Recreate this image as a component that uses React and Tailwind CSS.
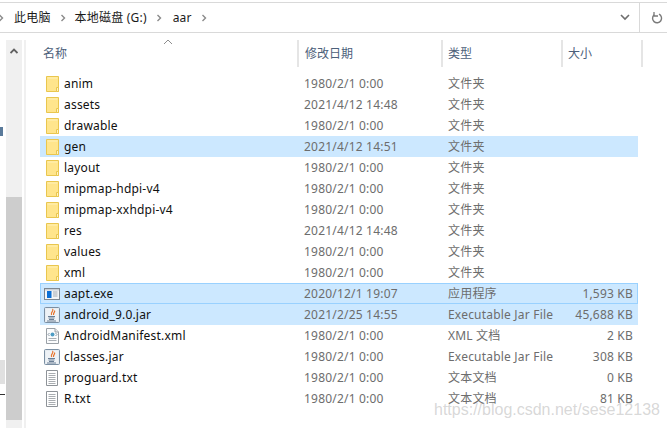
const FONT = '"Noto Sans","Noto Sans CJK SC",sans-serif';

function FolderIcon() {
  return (
    <svg width="16" height="18" viewBox="0 0 16 18" className="shrink-0">
      <path d="M2.5 1.5H14.5V16.5H2.5Z" fill="#ffe58c" stroke="#e9c64e" />
      <path d="M3.5 2.5H13.5V3.5H3.5Z" fill="#fff0b8" />
      <path d="M12.5 16.5V12.5H14.5V16.5Z" fill="#fff3c4" stroke="#e9c64e" />
    </svg>
  );
}
function ExeIcon() {
  return (
    <svg width="16" height="18" viewBox="0 0 16 18" className="shrink-0">
      <rect x="0.5" y="3.5" width="15" height="11" fill="#f4f5f6" stroke="#7d8791" />
      <rect x="1" y="4" width="14" height="1.5" fill="#c9d0d8" />
      <rect x="3" y="6" width="4.5" height="7" fill="#0a6fd6" />
      <path d="M9 7H13.5M9 9H13.5M9 11H13.5" stroke="#a4abb3" />
    </svg>
  );
}
function JarIcon() {
  return (
    <svg width="16" height="18" viewBox="0 0 16 18" className="shrink-0">
      <rect x="0.5" y="1.5" width="15" height="15" rx="1" fill="#dfe6ed" stroke="#7b8fa3" />
      <rect x="1.5" y="2.5" width="13" height="13" fill="#eef2f6" />
      <path d="M8.5 3C10.5 5 6 6 7.5 9M10.5 4.5C11.5 6 9 6.5 9.5 9" stroke="#e8722a" strokeWidth="1.2" fill="none" />
      <path d="M4 10.5H11M4.5 12H10.5M5 13.5H10M3 15H12" stroke="#6a7f96" />
    </svg>
  );
}
function XmlIcon() {
  return (
    <svg width="16" height="18" viewBox="0 0 16 18" className="shrink-0">
      <path d="M2.5 1.5H11L14.5 5V16.5H2.5Z" fill="#fbfcfd" stroke="#9aa0a6" />
      <path d="M11 1.5V5H14.5" fill="#e8ebee" stroke="#9aa0a6" />
      <circle cx="8.5" cy="7.5" r="2" fill="#4d9cc4" />
      <path d="M5.5 6L4 7.5L5.5 9M11.5 6L13 7.5L11.5 9" stroke="#8796a3" fill="none" />
      <path d="M4.5 11.5H12.5M4.5 13.5H12.5" stroke="#aab0b6" />
    </svg>
  );
}
function TxtIcon() {
  return (
    <svg width="16" height="18" viewBox="0 0 16 18" className="shrink-0">
      <path d="M2.5 1.5H13.5V16.5H2.5Z" fill="#ffffff" stroke="#8e9398" />
      <path d="M4.5 4.5H11.5M4.5 6.5H11.5M4.5 8.5H11.5M4.5 10.5H11.5M4.5 12.5H11.5M4.5 14.5H11.5" stroke="#a9adb1" />
    </svg>
  );
}

const rows = [
  ["anim", "1980/2/1 0:00", "文件夹", "", "folder"],
  ["assets", "2021/4/12 14:48", "文件夹", "", "folder"],
  ["drawable", "1980/2/1 0:00", "文件夹", "", "folder"],
  ["gen", "2021/4/12 14:51", "文件夹", "", "folder", "sel"],
  ["layout", "1980/2/1 0:00", "文件夹", "", "folder"],
  ["mipmap-hdpi-v4", "1980/2/1 0:00", "文件夹", "", "folder"],
  ["mipmap-xxhdpi-v4", "1980/2/1 0:00", "文件夹", "", "folder"],
  ["res", "2021/4/12 14:48", "文件夹", "", "folder"],
  ["values", "1980/2/1 0:00", "文件夹", "", "folder"],
  ["xml", "1980/2/1 0:00", "文件夹", "", "folder"],
  ["aapt.exe", "2020/12/1 19:07", "应用程序", "1,593 KB", "exe", "focus"],
  ["android_9.0.jar", "2021/2/25 14:55", "Executable Jar File", "45,688 KB", "jar", "sel"],
  ["AndroidManifest.xml", "1980/2/1 0:00", "XML 文档", "2 KB", "xml"],
  ["classes.jar", "1980/2/1 0:00", "Executable Jar File", "308 KB", "jar"],
  ["proguard.txt", "1980/2/1 0:00", "文本文档", "0 KB", "txt"],
  ["R.txt", "1980/2/1 0:00", "文本文档", "81 KB", "txt"],
];
const icons = { folder: FolderIcon, exe: ExeIcon, jar: JarIcon, xml: XmlIcon, txt: TxtIcon };

function Row({ r }) {
  const Icon = icons[r[4]];
  const bg =
    r[5] === "focus"
      ? "bg-[#cce8ff] border border-[#99d1ff]"
      : r[5] === "sel"
      ? "bg-[#cce8ff] border border-transparent"
      : "border border-transparent";
  return (
    <div className={`flex items-center h-[21px] w-[598px] text-[12px] leading-[19px] tracking-[0.2px] ${bg}`}>
      <div className="w-[263px] flex items-center pl-[3px] gap-[4px] text-[#101010] whitespace-nowrap">
        <Icon />
        <span>{r[0]}</span>
      </div>
      <div className="w-[144px] text-[#6d6d6d] whitespace-nowrap">{r[1]}</div>
      <div className="w-[117px] text-[#6d6d6d] whitespace-nowrap">{r[2]}</div>
      <div className="w-[68px] text-right text-[#6d6d6d] whitespace-nowrap">{r[3]}</div>
    </div>
  );
}

function Head({ w, pl, children }) {
  return (
    <div className={`${w} ${pl} h-[27px] flex items-center border-r-2 border-[#e5e5e5] text-[12px] text-[#4c607a] whitespace-nowrap`}>
      {children}
    </div>
  );
}

function Crumb() {
  return (
    <svg width="6" height="8" viewBox="0 0 6 8" className="shrink-0">
      <path d="M1.5 1L4.5 4L1.5 7" stroke="#8a8a8a" strokeWidth="1.4" fill="none" />
    </svg>
  );
}

export default function App() {
  return (
    <div className="relative w-[667px] h-[428px] overflow-hidden bg-white flex flex-col" style={{ fontFamily: FONT }}>
      <div className="mt-[2px] h-[31px] shrink-0 border-y border-[#d9d9d9] flex items-center text-[12px] tracking-[0.2px] text-[#1a1a1a]">
        <div className="flex items-center w-[640px] h-full border-r border-[#d9d9d9]">
          <div className="-ml-[2px]"><Crumb /></div>
          <span className="ml-[10px]">此电脑</span>
          <div className="ml-[9px]"><Crumb /></div>
          <span className="ml-[9px]">本地磁盘 (G:)</span>
          <div className="ml-[9px]"><Crumb /></div>
          <span className="ml-[11px]">aar</span>
          <div className="ml-[9px]"><Crumb /></div>
          <svg width="10" height="7" viewBox="0 0 10 7" className="ml-auto mr-[9px]">
            <path d="M1 1L5 5L9 1" stroke="#6e6e6e" strokeWidth="1.6" fill="none" />
          </svg>
        </div>
        <svg width="12" height="14" viewBox="0 0 12 14" className="ml-[11px]">
          <path d="M3.2 3.8A4.5 4.5 0 1 0 8 3.2" stroke="#7a7a7a" strokeWidth="1.4" fill="none" />
          <path d="M3 1V5H7" stroke="#7a7a7a" strokeWidth="1.3" fill="none" />
        </svg>
      </div>

      <div className="flex flex-1 min-h-0 mt-[7px]">
        <div className="relative w-[6px] shrink-0 self-stretch">
          <div className="absolute left-0 top-[320px] w-[5px] h-[24px] bg-[#e0e0e0]" />
          <span className="absolute left-0 top-[87px] w-[3px] h-[9px] bg-[#5a7a9a]" />
          <span className="absolute left-0 top-[354px] w-[5px] h-[1px] bg-[#303030]" />
        </div>
        <div className="w-[16px] shrink-0 bg-[#f0f0f0] flex flex-col">
          <div className="h-[157px] flex justify-center pt-[8px]">
            <svg width="8" height="6" viewBox="0 0 8 6">
              <path d="M0.5 5L4 1.5L7.5 5" stroke="#606060" strokeWidth="1.8" fill="none" />
            </svg>
          </div>
          <div className="h-[223px] bg-[#cdcdcd]" />
        </div>
        <div className="w-[2px] ml-[2px] shrink-0 bg-[#f0f0f0]" />
        <div className="ml-[14px] flex-1 min-w-0">
          <div className="relative flex h-[27px]">
            <Head w="w-[259px]" pl="pl-[3px]">名称</Head>
            <Head w="w-[144px]" pl="pl-[6px]">修改日期</Head>
            <Head w="w-[120px]" pl="pl-[5px]">类型</Head>
            <Head w="w-[80px]" pl="pl-[5px]">大小</Head>
            <svg width="10" height="6" viewBox="0 0 10 6" className="absolute left-[123px] -top-[1px]">
              <path d="M1 5L5 1L9 5" stroke="#8e8e8e" strokeWidth="1" fill="none" />
            </svg>
          </div>
          <div className="mt-[6px] flex flex-col">
            {rows.map((r) => (
              <Row key={r[0]} r={r} />
            ))}
          </div>
        </div>
      </div>

      <div
        className="absolute left-[434px] top-[400px] text-[16px] leading-[20px] text-[#9a9a9a]/40 whitespace-nowrap"
        style={{ fontFamily: '"Liberation Sans",sans-serif' }}
      >
        https://blog.csdn.net/sese12138
      </div>
    </div>
  );
}
